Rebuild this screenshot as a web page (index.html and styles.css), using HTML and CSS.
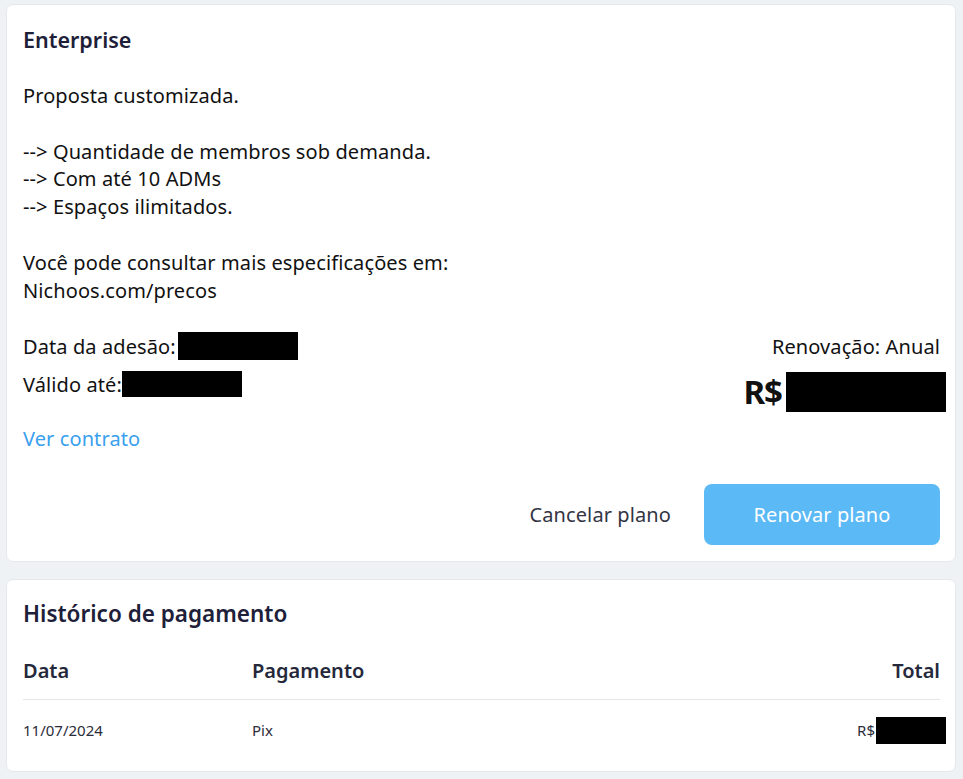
FILE: index.html
```html
<!DOCTYPE html>
<html lang="pt-BR">
<head>
<meta charset="utf-8">
<link rel="stylesheet" href="styles.css">
</head>
<body>
<main class="page">
  <section class="card plan">
    <h2 class="card-title">Enterprise</h2>
    <p class="description">Proposta customizada.

--&gt; Quantidade de membros sob demanda.
--&gt; Com até 10 ADMs
--&gt; Espaços ilimitados.

Você pode consultar mais especificações em:
Nichoos.com/precos</p>
    <div class="details">
      <div class="dates">
        <div class="date-row">Data da adesão:<span class="redact redact-a"></span></div>
        <div class="date-row">Válido até:<span class="redact redact-b"></span></div>
        <a class="link" href="#">Ver contrato</a>
      </div>
      <div class="pricing">
        <div class="renewal">Renovação: Anual</div>
        <div class="price">R$<span class="redact redact-c"></span></div>
      </div>
    </div>
    <div class="actions">
      <button class="btn btn-ghost">Cancelar plano</button>
      <button class="btn btn-primary">Renovar plano</button>
    </div>
  </section>
  <section class="card history">
    <h2 class="card-title history-title">Histórico de pagamento</h2>
    <div class="table">
      <div class="thead">
        <div class="col-date">Data</div>
        <div class="col-pay">Pagamento</div>
        <div class="col-total">Total</div>
      </div>
      <div class="trow">
        <div class="col-date">11/07/2024</div>
        <div class="col-pay">Pix</div>
        <div class="col-total">R$<span class="redact redact-d"></span></div>
      </div>
    </div>
  </section>
</main>
</body>
</html>
```
FILE: styles.css
```css
* { box-sizing: border-box; }
html, body { margin: 0; padding: 0; }
body {
  background: #eff2f5;
  font-family: "Noto Sans", "Open Sans", sans-serif;
  color: #111;
}
.page {
  padding: 4px 7px 8px 6px;
  display: flex;
  flex-direction: column;
  gap: 17px;
}
.card {
  background: #fff;
  border: 1px solid #e6e9ec;
  border-radius: 7px;
  padding: 20px 15px 16px 16px;
}
.card-title {
  margin: 0;
  font-size: 21.5px;
  font-weight: 600;
  color: #1d2038;
  line-height: 30px;
}
.description {
  margin: 27px 0 0 0;
  white-space: pre-wrap;
  font-size: 20px;
  line-height: 27.8px;
  letter-spacing: 0.1px;
}
.details {
  margin-top: 23px;
  display: flex;
  justify-content: space-between;
  font-size: 20px;
  letter-spacing: 0.1px;
}
.dates { display: flex; flex-direction: column; }
.date-row {
  display: flex;
  align-items: center;
  height: 38px;
}
.redact { display: inline-block; background: #000; }
.redact-a { width: 120px; height: 28px; margin-left: 2px; }
.redact-b { width: 120px; height: 26px; }
.link {
  margin-top: 22px;
  color: #3a9fee;
  text-decoration: none;
  line-height: 28px;
}
.pricing {
  display: flex;
  flex-direction: column;
  align-items: flex-end;
}
.renewal { height: 38px; display: flex; align-items: center; }
.price {
  display: flex;
  align-items: center;
  font-size: 33px;
  font-weight: 700;
  letter-spacing: -1px;
  margin-right: -6px;
  margin-top: 4px;
}
.redact-c { width: 160px; height: 40px; margin-left: 4px; }
.actions {
  margin-top: 31px;
  display: flex;
  justify-content: flex-end;
  align-items: center;
  gap: 13px;
}
.btn {
  font-family: inherit;
  font-size: 20px;
  letter-spacing: 0.1px;
  border: none;
  border-radius: 8px;
  height: 61px;
  cursor: pointer;
}
.btn-ghost {
  background: transparent;
  color: #333544;
  padding: 0 20px;
}
.btn-primary {
  width: 236px;
  background: #5bb9f5;
  color: #fff;
}
.history { padding-top: 19px; padding-bottom: 11px; }
.history-title { font-size: 22.5px; line-height: 30px; }
.table { margin-top: 27px; }
.thead, .trow {
  display: grid;
  grid-template-columns: 229px 1fr 200px;
  align-items: center;
}
.thead {
  font-size: 20px;
  font-weight: 600;
  color: #25283a;
  line-height: 30px;
  padding-bottom: 13px;
  border-bottom: 1px solid #e3e5e8;
}
.trow {
  font-size: 15px;
  color: #2b2d3a;
  height: 60px;
}
.col-total { display: flex; justify-content: flex-end; align-items: center; }
.trow .col-total { margin-right: -6px; }
.redact-d { width: 70px; height: 27px; margin-left: 1px; }
```
